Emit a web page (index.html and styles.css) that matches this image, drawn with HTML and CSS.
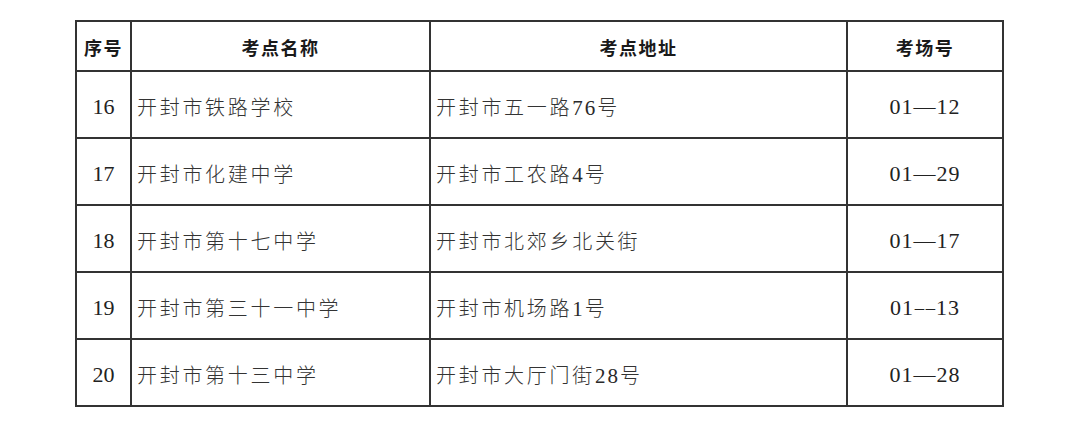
FILE: index.html
```html
<!DOCTYPE html>
<html lang="zh-CN">
<head>
<meta charset="utf-8">
<title>考点一览</title>
<link rel="stylesheet" href="styles.css">
</head>
<body>
<table class="exam-table">
  <colgroup>
    <col class="c-no">
    <col class="c-name">
    <col class="c-addr">
    <col class="c-room">
  </colgroup>
  <thead>
    <tr class="head-row">
      <th>序号</th>
      <th>考点名称</th>
      <th>考点地址</th>
      <th>考场号</th>
    </tr>
  </thead>
  <tbody>
    <tr>
      <td class="num">16</td>
      <td class="txt">开封市铁路学校</td>
      <td class="txt">开封市五一路<span class="lat">76</span>号</td>
      <td class="num room">01—12</td>
    </tr>
    <tr>
      <td class="num">17</td>
      <td class="txt">开封市化建中学</td>
      <td class="txt">开封市工农路<span class="lat">4</span>号</td>
      <td class="num room">01—29</td>
    </tr>
    <tr>
      <td class="num">18</td>
      <td class="txt">开封市第十七中学</td>
      <td class="txt">开封市北郊乡北关街</td>
      <td class="num room">01—17</td>
    </tr>
    <tr>
      <td class="num">19</td>
      <td class="txt">开封市第三十一中学</td>
      <td class="txt">开封市机场路<span class="lat">1</span>号</td>
      <td class="num room">01<span class="dash2">–</span><span class="dash2">–</span>13</td>
    </tr>
    <tr>
      <td class="num">20</td>
      <td class="txt">开封市第十三中学</td>
      <td class="txt">开封市大厅门街<span class="lat">28</span>号</td>
      <td class="num room">01—28</td>
    </tr>
  </tbody>
</table>
</body>
</html>
```

FILE: styles.css
```css
html, body {
  margin: 0;
  padding: 0;
  background: #ffffff;
}

body {
  padding: 20px 0 0 75px;
}

.exam-table {
  border-collapse: collapse;
  table-layout: fixed;
  width: 929px;
  border: 2px solid #333333;
}

.c-no { width: 55px; }
.c-name { width: 299px; }
.c-addr { width: 417px; }
.c-room { width: 156px; }

.exam-table th,
.exam-table td {
  border: 2px solid #333333;
  padding: 0;
}

.head-row th {
  height: 46px;
  font-family: "Noto Sans CJK SC", sans-serif;
  font-weight: 700;
  font-size: 18px;
  letter-spacing: 1.5px;
  color: #1a1a1a;
  text-align: center;
  vertical-align: middle;
  padding-top: 2px;
}

.exam-table tbody td {
  height: 61px;
  vertical-align: middle;
  padding-top: 4px;
}

.num {
  font-family: "Liberation Serif", serif;
  font-size: 22px;
  color: #222222;
  text-align: center;
}

.room {
  letter-spacing: 1px;
}

.dash2 {
  display: inline-block;
  width: 11px;
  letter-spacing: 0;
  text-align: center;
  transform: scaleX(0.85);
}

.txt {
  font-family: "Noto Sans CJK SC", sans-serif;
  font-weight: 300;
  font-size: 20px;
  letter-spacing: 2.7px;
  color: #333333;
  text-align: left;
  padding-left: 5px !important;
  white-space: nowrap;
}

.lat {
  font-family: "Liberation Serif", serif;
  font-weight: 400;
  font-size: 21px;
  letter-spacing: 2px;
  color: #2a2a2a;
}
```
